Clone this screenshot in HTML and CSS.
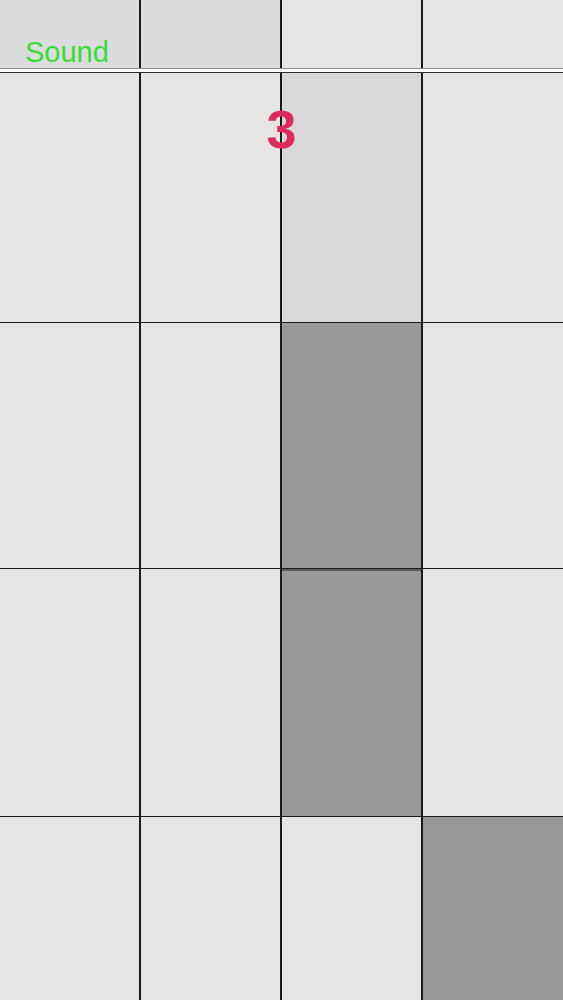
FILE: index.html
```html
<!DOCTYPE html>
<html>
<head>
<meta charset="utf-8">
<link rel="stylesheet" href="styles.css">
</head>
<body>
<div class="screen">
  <div class="topbar">
    <div class="cell top dim"><span class="sound">Sound</span></div>
    <div class="cell top dim"></div>
    <div class="cell top"></div>
    <div class="cell top"></div>
  </div>
  <div class="gap"></div>
  <div class="board">
    <div class="row r1">
      <div class="cell"></div>
      <div class="cell"></div>
      <div class="cell pressed"></div>
      <div class="cell"></div>
    </div>
    <div class="row r2">
      <div class="cell"></div>
      <div class="cell"></div>
      <div class="cell dark"></div>
      <div class="cell"></div>
    </div>
    <div class="row r3">
      <div class="cell"></div>
      <div class="cell"></div>
      <div class="cell dark"></div>
      <div class="cell"></div>
    </div>
    <div class="row r4">
      <div class="cell"></div>
      <div class="cell"></div>
      <div class="cell"></div>
      <div class="cell dark"></div>
    </div>
    <div class="score">3</div>
  </div>
</div>
</body>
</html>
```
FILE: styles.css
```css
html, body {
  margin: 0;
  padding: 0;
  background: #ffffff;
}
.screen {
  width: 563px;
  height: 1000px;
  overflow: hidden;
  display: flex;
  flex-direction: column;
  font-family: "Liberation Sans", Arial, sans-serif;
}
.topbar {
  height: 68px;
  display: grid;
  grid-template-columns: 139px 139px 139px 140px;
  column-gap: 2px;
  background: #1a1a1a;
  border-bottom: 1px solid #8e8d8d;
}
.cell {
  background: #e7e5e4;
}
.cell.top {
  background: #e6e5e3;
  position: relative;
}
.cell.top.dim {
  background: #dcdbdd;
}
.sound {
  position: absolute;
  left: 25px;
  top: 36px;
  font-size: 29px;
  line-height: 33px;
  color: #33df33;
}
.gap {
  height: 3px;
  background: #ffffff;
}
.board {
  flex: 1;
  position: relative;
  display: flex;
  flex-direction: column;
  row-gap: 1px;
  background: #1a1a1a;
  border-top: 1px solid #2a2a2a;
}
.row {
  display: grid;
  grid-template-columns: 139px 139px 139px 140px;
  column-gap: 2px;
}
.r1 { height: 249px; }
.r2 { height: 245px; }
.r3 { height: 247px; }
.r4 { flex: 1; }
.cell.pressed {
  background: #d9d8da;
}
.cell.dark {
  background: #9a9899;
}
.r3 .cell.dark {
  border-top: 2px solid #5e5d5e;
}
.score {
  position: absolute;
  left: 0;
  right: 0;
  top: 25px;
  text-align: center;
  font-size: 54px;
  font-weight: bold;
  line-height: 62px;
  color: #df2a5c;
}
```
